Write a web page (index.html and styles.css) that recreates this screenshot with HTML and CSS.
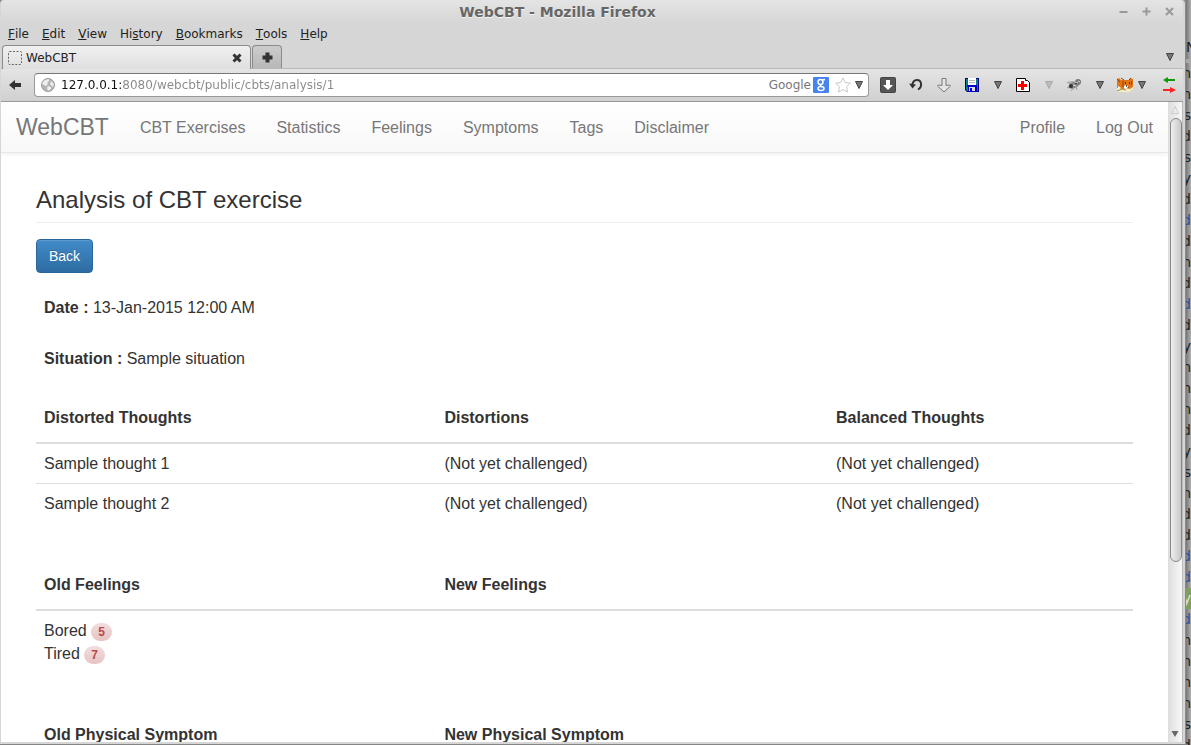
FILE: index.html
```html
<!DOCTYPE html>
<html lang="en">
<head>
<meta charset="utf-8">
<title>WebCBT</title>
<link rel="stylesheet" href="styles.css">
</head>
<body>
<div class="window">
  <header class="titlebar">
    <span class="window-title">WebCBT - Mozilla Firefox</span>
    <div class="window-buttons">
      <button aria-label="Minimize"><svg width="9" height="9"><path d="M0.500 5h8" stroke="#999" stroke-width="2"/></svg></button>
      <button aria-label="Maximize"><svg width="9" height="9"><path d="M0.500 4.500h8M4.500 0.500v8" stroke="#999" stroke-width="2"/></svg></button>
      <button aria-label="Close"><svg width="9" height="9"><path d="M1 1l7 7M8 1l-7 7" stroke="#999" stroke-width="2"/></svg></button>
    </div>
  </header>

  <div class="menubar">
    <button><u>F</u>ile</button>
    <button><u>E</u>dit</button>
    <button><u>V</u>iew</button>
    <button>Hi<u>s</u>tory</button>
    <button><u>B</u>ookmarks</button>
    <button><u>T</u>ools</button>
    <button><u>H</u>elp</button>
  </div>

  <div class="tabs">
    <div class="tab">
      <svg width="14" height="14" fill="none" stroke="#666"><rect x=".5" y=".5" width="13" height="13" rx="1" stroke-dasharray="2 1.500"/></svg>
      <span class="tab-label">WebCBT</span>
      <button aria-label="Close tab"><svg width="10" height="10"><path d="M1.500 1.500l7 7M8.500 1.500l-7 7" stroke="#333" stroke-width="3"/></svg></button>
    </div>
    <button class="new-tab" aria-label="New tab"><svg width="11" height="11"><path d="M5.500 0.500v10M0.500 5.500h10" stroke="#333" stroke-width="4"/></svg></button>
    <button class="all-tabs" aria-label="List all tabs"><svg width="8" height="8"><path d="M.5 .5h7L4 7.500z" fill="#777" stroke="#444"/></svg></button>
  </div>

  <div class="toolbar">
    <button aria-label="Back"><svg width="12" height="10"><path d="M0 5l6-5v3h6v4H6v3z" fill="#333"/></svg></button>
    <div class="urlbar">
      <svg width="14" height="14"><circle cx="7" cy="7" r="6.500" fill="#b4b4b4" stroke="#999"/><path d="M4 2l4-1 0 2-2 2 1 1-2 2-4-2 1-2zM10 3l3 3-1 3-3-3zM7 8l3 1 0 2-3 2-1-3z" fill="#eee"/></svg>
      <input class="address" type="text" aria-label="Address" value="127.0.0.1:8080/webcbt/public/cbts/analysis/1">
      <span class="engine">Google</span>
      <svg class="engine-logo" width="16" height="16"><rect width="16" height="16" rx="1" fill="#4583ee"/><g fill="none" stroke="#fff" stroke-width="1.500"><ellipse cx="7.500" cy="5" rx="2.500" ry="2.500"/><path d="M9 3l3-.5M8 7.500c-2 1 0 1.500 1.500 2.500"/><ellipse cx="8" cy="11.500" rx="3" ry="2"/></g></svg>
      <button aria-label="Bookmark this page"><svg width="16" height="16"><path d="M8 .8l2.200 4.700 5.100.7-3.700 3.600.9 5.200L8 12.600 3.500 15l.9-5.200L.7 6.200l5.100-.7z" fill="#fff" stroke="#c8c8c8"/></svg></button>
      <button aria-label="Address history"><svg width="8" height="8"><path d="M.5 .5h7L4 7.500z" fill="#777" stroke="#444"/></svg></button>
    </div>
    <div class="tools">
      <button aria-label="Downloads"><svg width="16" height="16"><rect x=".5" y=".5" width="15" height="15" rx="1" fill="#555" stroke="#444"/><path d="M6 3h4v5h3l-5 5-5-5h3z" fill="#fff"/></svg></button>
      <button aria-label="Undo close tab"><svg width="16" height="16"><path d="M4.500 8.500C4.500 5 6.500 3 9 3c5 0 5.500 7 1 9.500" fill="none" stroke="#333" stroke-width="2"/><path d="M1 6.500l7 1-3.500 4z" fill="#333"/></svg></button>
      <button aria-label="Save downloads"><svg width="16" height="16"><path d="M6 1.500h4v7l3.500-.5 1 1L8 15 1.500 9l1-1 3.500.5z" fill="#e4e6e4" stroke="#777c78"/></svg></button>
      <button aria-label="Save page"><svg width="16" height="16"><path d="M1 1h14v14H3l-2-2z" fill="#00008c"/><path d="M2 2h12v12H3l-1-1z" fill="#008080"/><path d="M4 1h8v7H4z" fill="#fff"/><path d="M5 3.500h6M5 5.500h6" stroke="#bbb"/><path d="M3 8h10v2H3z" fill="#0000c8"/><path d="M4 10h9v5H4z" fill="#0000c8"/><path d="M5 10h6v4H5z" fill="#ddd"/><path d="M6 11h2v3H6z" fill="#0000c8"/></svg></button>
      <button class="drop" aria-label="Save options"><svg width="8" height="8"><path d="M.5 .5h7L4 7.500z" fill="#777" stroke="#444"/></svg></button>
      <button aria-label="Session"><svg width="16" height="16"><path d="M1.500 1.500h9v2h2l2 2v9h-13z" fill="#fff" stroke="#000"/><path d="M7.500 4v9M3 8.500h9" stroke="#f00" stroke-width="3"/></svg></button>
      <button class="drop" aria-label="Session options" disabled><svg width="8" height="8"><path d="M.5 .5h7L4 7.500z" fill="#bbb" stroke="#aaa"/></svg></button>
      <button aria-label="Debugger"><svg width="16" height="16"><g fill="none" stroke="#999"><path d="M1 11l4-2M5 14l3-3M11 13l-1-3"/></g><path d="M0 5l7-1 3 2-4 3z" fill="#aaa"/><ellipse cx="8" cy="8" rx="6" ry="3" fill="#888" transform="rotate(-25 8 8)"/><circle cx="12" cy="5" r="3" fill="#777"/><circle cx="5" cy="9" r="2" fill="#333"/><path d="M9 5l3 1M7 8l3 1M12 4l2 1" stroke="#ddd"/><path d="M9 7l2-1" stroke="#333"/></svg></button>
      <button class="drop" aria-label="Debugger options"><svg width="8" height="8"><path d="M.5 .5h7L4 7.500z" fill="#777" stroke="#444"/></svg></button>
      <div class="pair">
        <button aria-label="Fox tool"><svg width="16" height="16"><path d="M0 9h16v3l-4 3-12 0z" fill="#f3ecc0"/><path d="M0 2l2-1 2 2h8l1-2 3 1v8l-3 2-4-1-3 1-6-1z" fill="#e27416"/><path d="M0 2l3 3M4 1l3 2M12 3l2-2M6 4v6M15 4l-1 4M8 10l2 1 2-1" stroke="#8a430c" fill="none"/><path d="M7 9l2-1 2 1-1 3-3-1zM1 9l3 2-3 1z" fill="#fff"/><path d="M8 6h1M12 6h1M9 9h1" stroke="#222" stroke-width="1.500"/><path d="M0 14l5-2 4 1" stroke="#a08c50" fill="none"/></svg></button>
        <button aria-label="Fox tool options"><svg width="8" height="8"><path d="M.5 .5h7L4 7.500z" fill="#777" stroke="#444"/></svg></button>
      </div>
      <button class="proxy" aria-label="Proxy"><svg width="16" height="16"><path d="M4 3h10" stroke="#0a9a0a" stroke-width="2"/><path d="M2 3l5-3v6z" fill="#0a9a0a"/><path d="M2 13h9" stroke="#f22" stroke-width="2"/><path d="M15 13L9 10v6z" fill="#f22"/></svg></button>
    </div>
  </div>

  <div class="viewport">
    <div class="page">
      <nav class="navbar">
        <a class="brand" href="#">WebCBT</a>
        <a href="#">CBT Exercises</a>
        <a href="#">Statistics</a>
        <a href="#">Feelings</a>
        <a href="#">Symptoms</a>
        <a href="#">Tags</a>
        <a href="#">Disclaimer</a>
        <a class="push" href="#">Profile</a>
        <a href="#">Log Out</a>
      </nav>
      <main class="content">
        <h1>Analysis of CBT exercise</h1>
        <a class="btn" href="#">Back</a>
        <p><b>Date :</b> 13-Jan-2015 12:00 AM</p>
        <p><b>Situation :</b> Sample situation</p>
        <table>
          <colgroup><col class="col-first"><col class="col-second"><col></colgroup>
          <thead><tr><th>Distorted Thoughts</th><th>Distortions</th><th>Balanced Thoughts</th></tr></thead>
          <tbody>
            <tr><td>Sample thought 1</td><td>(Not yet challenged)</td><td>(Not yet challenged)</td></tr>
            <tr><td>Sample thought 2</td><td>(Not yet challenged)</td><td>(Not yet challenged)</td></tr>
          </tbody>
        </table>
        <table>
          <colgroup><col class="col-first"><col></colgroup>
          <thead><tr><th>Old Feelings</th><th>New Feelings</th></tr></thead>
          <tbody>
            <tr><td>Bored <span class="badge">5</span><br>Tired <span class="badge">7</span></td><td></td></tr>
          </tbody>
        </table>
        <table>
          <colgroup><col class="col-first"><col></colgroup>
          <thead><tr><th>Old Physical Symptom</th><th>New Physical Symptom</th></tr></thead>
        </table>
      </main>
    </div>
    <div class="scrollbar">
      <svg width="8" height="8"><path d="M.5 7.500h7L4 .5z" fill="none" stroke="#ccc"/></svg>
      <div class="track"><div class="thumb"></div></div>
      <svg width="8" height="8"><path d="M.5 1h7L4 7z" fill="#666"/></svg>
    </div>
  </div>
</div>

<aside class="behind" aria-hidden="true">
  <div class="behind-head">N</div>
  <div class="behind-lines">
    <span>n</span><span>n</span><span>s</span><span>d</span><span>s</span><span>y</span><span>d</span><span class="blue">d</span><span>d</span><span>n</span><span>d</span><span class="blue">d</span><span>d</span><span>y</span><span>n</span><span>n</span><span>n</span><span>d</span><span>y</span><span>s</span><span>n</span><span>d</span><span>d</span><span class="blue">d</span><span class="blue">d</span><span class="selected">y</span><span class="blue">d</span><span>n</span><span>n</span><span>n</span><span>n</span><span>s</span><span>d</span>
  </div>
</aside>
</body>
</html>
```
FILE: styles.css
```css
* { box-sizing: border-box; }

body {
  margin: 0;
  height: 100vh;
  overflow: hidden;
  display: grid;
  grid-template-columns: 1fr 5px;
  background: #888;
  font: 12px/16px "DejaVu Sans", sans-serif;
  color: #222;
}

button {
  display: flex;
  align-items: center;
  justify-content: center;
  margin: 0;
  padding: 0;
  border: 0;
  background: none;
  font: inherit;
  color: inherit;
}

svg { display: block; flex: none; }

.window {
  display: flex;
  flex-direction: column;
  height: 100vh;
  min-width: 0;
  padding: 0 2px 2px 1px;
  background: #d6d6d6;
  border-right: 1px solid #8a8a8a;
  border-bottom: 1px solid #858585;
  border-radius: 4px 4px 0 0;
}

.titlebar {
  flex: none;
  display: grid;
  grid-template-columns: 1fr auto 1fr;
  align-items: center;
  height: 23px;
  padding-right: 9px;
  background: linear-gradient(#e4e4e4, #d6d6d6);
  border-radius: 4px 4px 0 0;
}

.window-title {
  grid-column: 2;
  margin-right: 60px;
  font-size: 14px;
  font-weight: bold;
  color: #666;
  text-shadow: 0 1px #f4f4f4;
}

.window-buttons { display: flex; justify-content: flex-end; gap: 14px; }

.menubar { flex: none; display: flex; gap: 13px; height: 22px; padding-left: 7px; }

.tabs { flex: none; display: flex; align-items: flex-end; height: 24px; border-bottom: 1px solid #b8b8b8; }

.tab {
  display: flex;
  align-items: center;
  gap: 4px;
  width: 249px;
  height: 24px;
  margin: 0 1px -1px;
  padding: 0 8px 0 5px;
  background: linear-gradient(#f0f0f0, #dfdfdf);
  border: 1px solid #8a8a8a;
  border-bottom: 0;
  border-radius: 4px 4px 0 0;
}

.tab-label { flex: 1; }

.new-tab {
  width: 30px;
  height: 23px;
  background: linear-gradient(#ccc, #b8b8b8);
  border: 1px solid #8a8a8a;
  border-bottom: 0;
  border-radius: 4px 4px 0 0;
}

.all-tabs { align-self: center; margin-left: auto; margin-right: 9px; }

.toolbar {
  flex: none;
  display: flex;
  align-items: center;
  height: 33px;
  padding: 0 6px 0 8px;
  background: linear-gradient(#e4e4e4, #d0d0d0);
  border-bottom: 1px solid #999;
}

.urlbar {
  flex: 1;
  display: flex;
  align-items: center;
  gap: 4px;
  height: 24px;
  margin: 0 11px 0 13px;
  padding: 0 5px 0 6px;
  background: #fff;
  border: 1px solid #999;
  border-top-color: #777;
  border-radius: 4px;
}

.address {
  flex: 1;
  min-width: 0;
  margin-left: 2px;
  padding: 0;
  border: 0;
  outline: 0;
  font: 12px/16px "DejaVu Sans", sans-serif;
  color: transparent;
  background: linear-gradient(to right, #111 60px, #888 60px);
  background-clip: text;
  -webkit-background-clip: text;
}

.engine { color: #777; }
.engine-logo { margin: 0 2px 0 -2px; }

.tools { display: flex; align-items: center; gap: 12px; }
.drop { margin: 0 1px 0 2px; }
.pair { display: flex; align-items: center; gap: 5px; }
.proxy { margin-left: 3px; }

.viewport { flex: 1; min-height: 0; display: flex; background: #fff; }

.page {
  flex: 1;
  min-width: 0;
  overflow: hidden;
  font: 16px/23px "Liberation Sans", sans-serif;
  color: #333;
}

.navbar {
  display: flex;
  align-items: center;
  gap: 31px;
  height: 51px;
  padding: 0 15px;
  background: linear-gradient(#fff, #f8f8f8);
  border-bottom: 1px solid #e7e7e7;
  box-shadow: 0 1px 5px rgba(0, 0, 0, 0.075);
}

.navbar a { color: #777; text-decoration: none; }
.navbar .brand { font-size: 23px; }
.navbar .push { margin-left: auto; }

.content { padding: 33px 35px 0; }

h1 {
  margin: 0 0 16px;
  padding-bottom: 9px;
  border-bottom: 1px solid #eee;
  font-size: 24px;
  font-weight: normal;
  line-height: 27px;
}

.btn {
  display: inline-block;
  padding: 6px 12px;
  margin-bottom: 23px;
  background: linear-gradient(#428bca, #2d6ca2);
  border: 1px solid #2b669a;
  border-radius: 4px;
  box-shadow: inset 0 1px rgba(255, 255, 255, 0.15);
  color: #fff;
  font-size: 14px;
  line-height: 20px;
  text-decoration: none;
  text-shadow: 0 -1px rgba(0, 0, 0, 0.2);
  vertical-align: top;
}

p { margin: 0 8px 28px; }

table {
  width: 100%;
  margin: 0 0 42px;
  border-collapse: collapse;
  table-layout: fixed;
}

p + table { margin-top: 28px; }
.col-first { width: 36.5%; }
.col-second { width: 35.7%; }

th { padding: 8px 8px 13px; border-bottom: 2px solid #ddd; text-align: left; }
td { padding: 8px; vertical-align: top; }
tr + tr td { border-top: 1px solid #ddd; }

.badge {
  display: inline-block;
  padding: 3px 7px;
  background: linear-gradient(#f2dede, #e7c3c3);
  border-radius: 10px;
  color: #b94a48;
  font-size: 12px;
  font-weight: bold;
  line-height: 12px;
  vertical-align: middle;
}

.scrollbar {
  flex: none;
  display: flex;
  flex-direction: column;
  align-items: center;
  width: 15px;
  padding: 4px 0;
  gap: 4px;
  background: linear-gradient(to right, #ddd, #f8f8f8);
  border-right: 1px solid #bbb;
}

.track { flex: 1; width: 14px; padding-left: 2px; }

.thumb {
  width: 12px;
  height: 73%;
  background: linear-gradient(to right, #eee, #c8c8c8);
  border: 1px solid #888;
  border-radius: 6px;
}

.behind {
  overflow: hidden;
  background: linear-gradient(to right, #777, #b0b0b0);
  font: 14px/21px "DejaVu Sans", sans-serif;
}

.behind-head { height: 63px; padding-top: 37px; border-bottom: 4px solid #aaa; }
.behind-lines { display: flex; flex-direction: column; align-items: flex-end; }
.behind-lines span { width: 5px; direction: rtl; overflow: hidden; color: #222; }
.behind-lines .blue { color: #24529a; }
.behind-lines .selected { background: #7ea05c; color: #dfe8d4; }
```
